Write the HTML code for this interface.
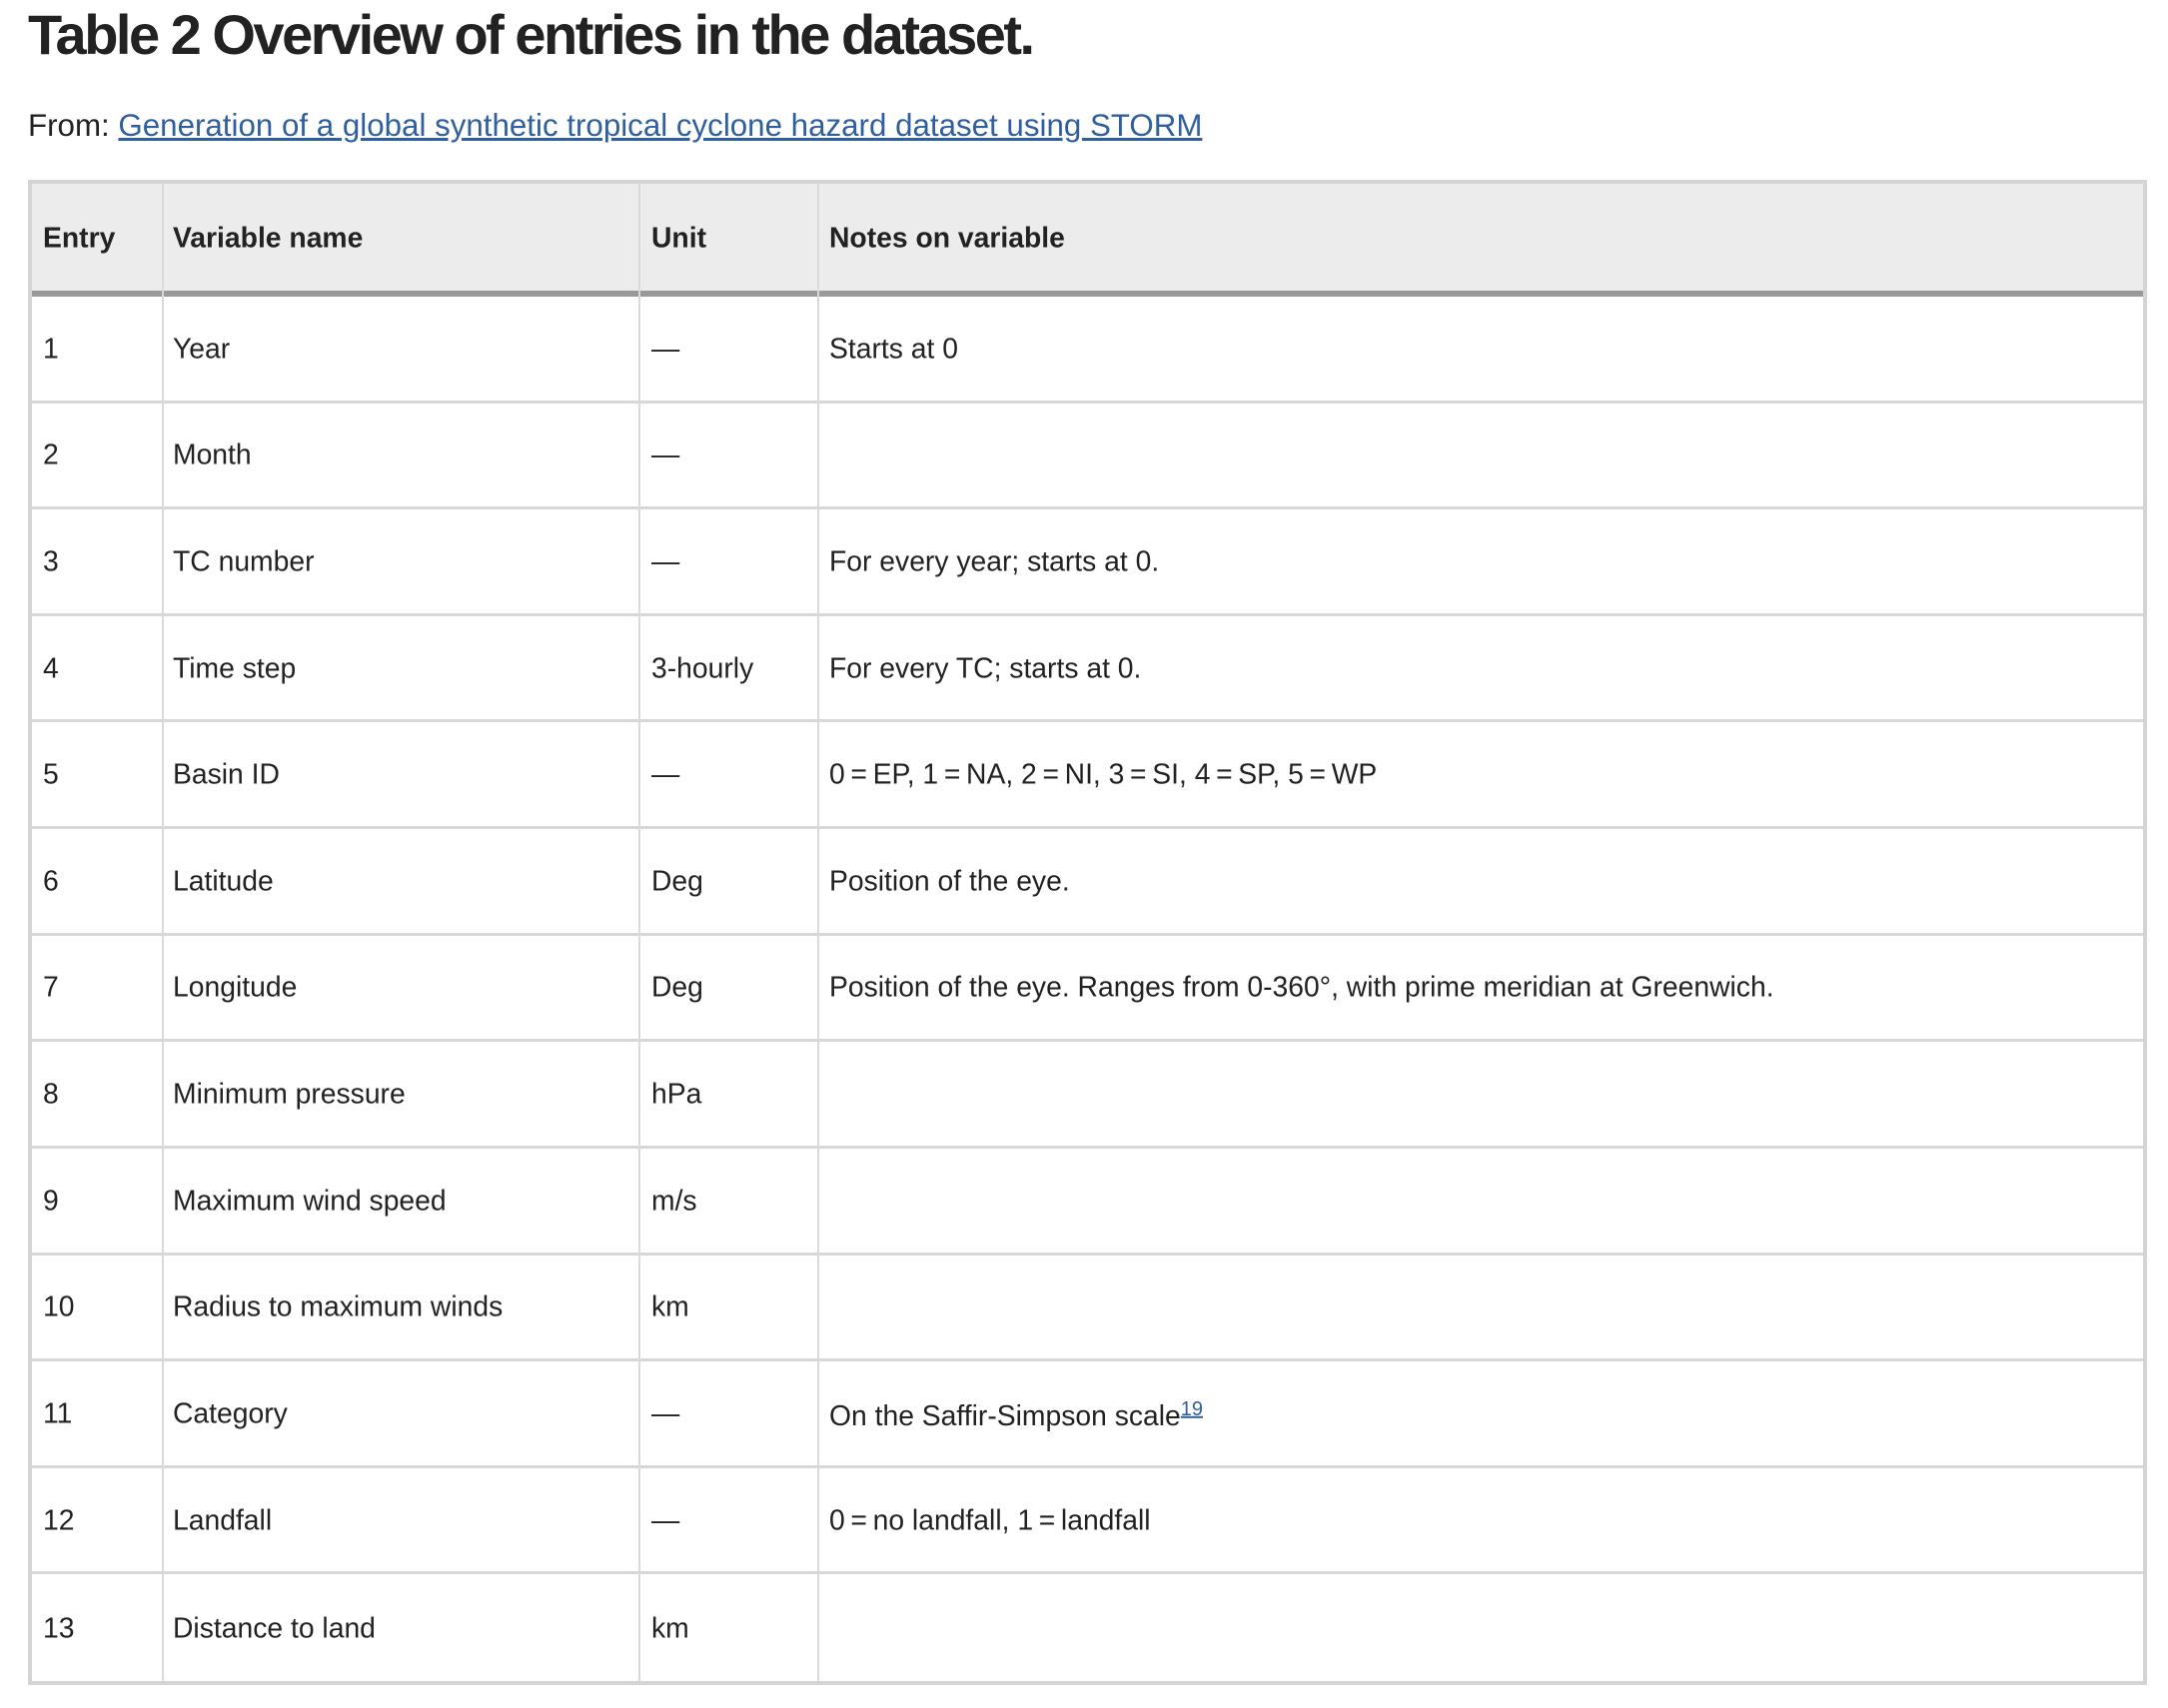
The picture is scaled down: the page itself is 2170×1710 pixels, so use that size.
<!DOCTYPE html>
<html><head><meta charset="utf-8"><style>
body{margin:0;background:#fff;width:2170px;height:1710px;position:relative;font-family:"Liberation Sans",sans-serif;color:#222;overflow:hidden}
h1{position:absolute;left:28px;top:2px;margin:0;font-size:56px;font-weight:bold;letter-spacing:-2.5px;color:#222;white-space:nowrap}
.from{position:absolute;left:28px;top:108px;font-size:31.3px;color:#222;white-space:nowrap}
.from a{color:#2f5f9e;text-decoration:underline}
.tbl{position:absolute;left:28px;top:180px;width:2121px;height:1507px;border:4px solid #d4d4d4;box-sizing:border-box}
.hd{position:absolute;left:0;top:0;right:0;height:107px;background:#ececec;border-bottom:6px solid #999}
.row{position:absolute;left:0;right:0;height:107px;box-sizing:border-box;border-bottom:3px solid #d7d7d7}
.vl{position:absolute;top:0;bottom:0;width:2px;background:#dadada}
.c{position:absolute;font-size:28.3px;white-space:nowrap;transform:translateY(-50%);top:50%}
.hd .c{font-weight:bold}
sup a{color:#2f5f9e;font-size:20px;text-decoration:underline}
</style></head><body>
<h1>Table 2 Overview of entries in the dataset.</h1>
<div class="from">From: <a>Generation of a global synthetic tropical cyclone hazard dataset using STORM</a></div>
<div class="tbl">
<div class="hd"><span class="c" style="left:11px">Entry</span><span class="c" style="left:141px">Variable name</span><span class="c" style="left:620px">Unit</span><span class="c" style="left:798px">Notes on variable</span></div>
<div id="rows"></div>
<div class="vl" style="left:130px"></div>
<div class="vl" style="left:607px"></div>
<div class="vl" style="left:786px"></div>
</div>
<script>
var d=[["1","Year","—","Starts at 0"],["2","Month","—",""],["3","TC number","—","For every year; starts at 0."],["4","Time step","3-hourly","For every TC; starts at 0."],["5","Basin ID","—","0\u2009=\u2009EP, 1\u2009=\u2009NA, 2\u2009=\u2009NI, 3\u2009=\u2009SI, 4\u2009=\u2009SP, 5\u2009=\u2009WP"],["6","Latitude","Deg","Position of the eye."],["7","Longitude","Deg","Position of the eye. Ranges from 0-360°, with prime meridian at Greenwich."],["8","Minimum pressure","hPa",""],["9","Maximum wind speed","m/s",""],["10","Radius to maximum winds","km",""],["11","Category","—","On the Saffir-Simpson scale<sup><a>19</a></sup>"],["12","Landfall","—","0\u2009=\u2009no landfall, 1\u2009=\u2009landfall"],["13","Distance to land","km",""]];
var h="";var top0=113,rh=(1499-113)/13;
d.forEach(function(r,i){h+='<div class="row" style="top:'+(top0+i*rh)+'px;height:'+rh+'px;'+(i==12?'border-bottom:none':'')+'"><span class="c" style="left:11px">'+r[0]+'</span><span class="c" style="left:141px">'+r[1]+'</span><span class="c" style="left:620px">'+r[2]+'</span><span class="c" style="left:798px">'+r[3]+'</span></div>';});
document.getElementById("rows").outerHTML=h;
</script>
</body></html>
